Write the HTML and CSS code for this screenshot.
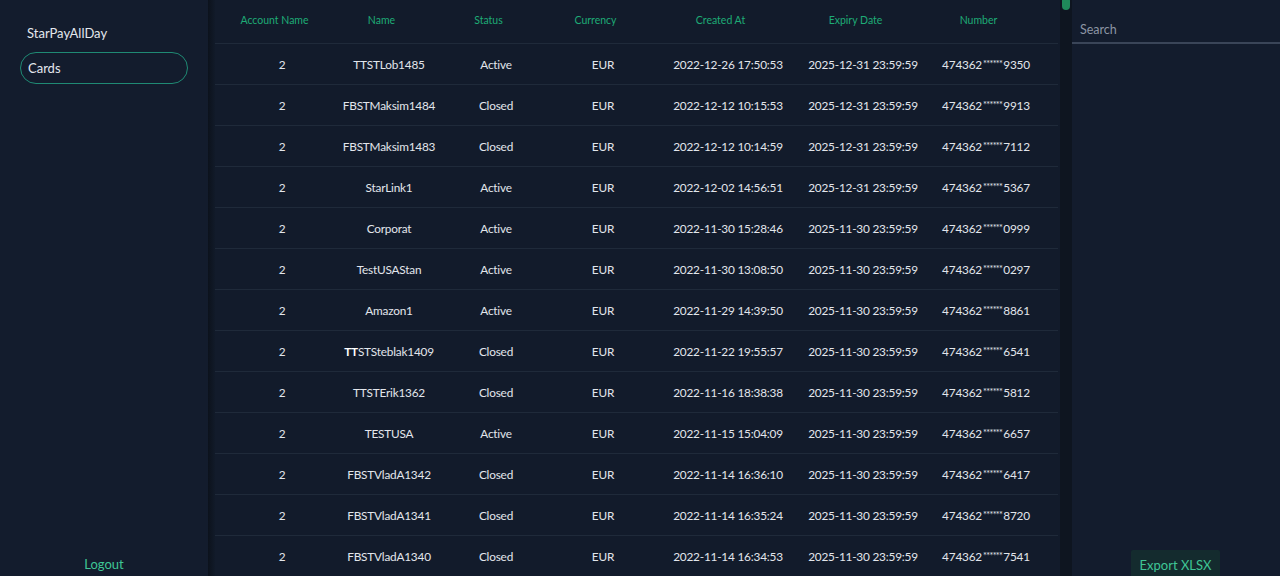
FILE: index.html
```html
<!DOCTYPE html>
<html>
<head>
<meta charset="utf-8">
<link rel="stylesheet" href="styles.css">
</head>
<body>
<div class="app">
  <aside class="sidebar">
    <div class="brand">StarPayAllDay</div>
    <div class="nav-item">Cards</div>
    <div class="spacer"></div>
    <div class="logout">Logout</div>
  </aside>
  <div class="gap"></div>
  <main class="main">
    <div class="row head">
      <div class="cell">Account Name</div>
      <div class="cell">Name</div>
      <div class="cell">Status</div>
      <div class="cell">Currency</div>
      <div class="cell">Created At</div>
      <div class="cell">Expiry Date</div>
      <div class="cell">Number</div>
    </div>
    <div class="row"><div class="cell">2</div><div class="cell">TTSTLob1485</div><div class="cell">Active</div><div class="cell">EUR</div><div class="cell">2022-12-26 17:50:53</div><div class="cell">2025-12-31 23:59:59</div><div class="cell">474362<span class="mask">******</span>9350</div></div>
    <div class="row"><div class="cell">2</div><div class="cell">FBSTMaksim1484</div><div class="cell">Closed</div><div class="cell">EUR</div><div class="cell">2022-12-12 10:15:53</div><div class="cell">2025-12-31 23:59:59</div><div class="cell">474362<span class="mask">******</span>9913</div></div>
    <div class="row"><div class="cell">2</div><div class="cell">FBSTMaksim1483</div><div class="cell">Closed</div><div class="cell">EUR</div><div class="cell">2022-12-12 10:14:59</div><div class="cell">2025-12-31 23:59:59</div><div class="cell">474362<span class="mask">******</span>7112</div></div>
    <div class="row"><div class="cell">2</div><div class="cell">StarLink1</div><div class="cell">Active</div><div class="cell">EUR</div><div class="cell">2022-12-02 14:56:51</div><div class="cell">2025-12-31 23:59:59</div><div class="cell">474362<span class="mask">******</span>5367</div></div>
    <div class="row"><div class="cell">2</div><div class="cell">Corporat</div><div class="cell">Active</div><div class="cell">EUR</div><div class="cell">2022-11-30 15:28:46</div><div class="cell">2025-11-30 23:59:59</div><div class="cell">474362<span class="mask">******</span>0999</div></div>
    <div class="row"><div class="cell">2</div><div class="cell">TestUSAStan</div><div class="cell">Active</div><div class="cell">EUR</div><div class="cell">2022-11-30 13:08:50</div><div class="cell">2025-11-30 23:59:59</div><div class="cell">474362<span class="mask">******</span>0297</div></div>
    <div class="row"><div class="cell">2</div><div class="cell">Amazon1</div><div class="cell">Active</div><div class="cell">EUR</div><div class="cell">2022-11-29 14:39:50</div><div class="cell">2025-11-30 23:59:59</div><div class="cell">474362<span class="mask">******</span>8861</div></div>
    <div class="row"><div class="cell">2</div><div class="cell"><b class="bold">TT</b>STSteblak1409</div><div class="cell">Closed</div><div class="cell">EUR</div><div class="cell">2022-11-22 19:55:57</div><div class="cell">2025-11-30 23:59:59</div><div class="cell">474362<span class="mask">******</span>6541</div></div>
    <div class="row"><div class="cell">2</div><div class="cell">TTSTErik1362</div><div class="cell">Closed</div><div class="cell">EUR</div><div class="cell">2022-11-16 18:38:38</div><div class="cell">2025-11-30 23:59:59</div><div class="cell">474362<span class="mask">******</span>5812</div></div>
    <div class="row"><div class="cell">2</div><div class="cell">TESTUSA</div><div class="cell">Active</div><div class="cell">EUR</div><div class="cell">2022-11-15 15:04:09</div><div class="cell">2025-11-30 23:59:59</div><div class="cell">474362<span class="mask">******</span>6657</div></div>
    <div class="row"><div class="cell">2</div><div class="cell">FBSTVladA1342</div><div class="cell">Closed</div><div class="cell">EUR</div><div class="cell">2022-11-14 16:36:10</div><div class="cell">2025-11-30 23:59:59</div><div class="cell">474362<span class="mask">******</span>6417</div></div>
    <div class="row"><div class="cell">2</div><div class="cell">FBSTVladA1341</div><div class="cell">Closed</div><div class="cell">EUR</div><div class="cell">2022-11-14 16:35:24</div><div class="cell">2025-11-30 23:59:59</div><div class="cell">474362<span class="mask">******</span>8720</div></div>
    <div class="row"><div class="cell">2</div><div class="cell">FBSTVladA1340</div><div class="cell">Closed</div><div class="cell">EUR</div><div class="cell">2022-11-14 16:34:53</div><div class="cell">2025-11-30 23:59:59</div><div class="cell">474362<span class="mask">******</span>7541</div></div>
  </main>
  <div class="scroll"><div class="thumb"></div></div>
  <aside class="panel">
    <div class="search">Search</div>
    <div class="spacer"></div>
    <div class="export">Export XLSX</div>
  </aside>
</div>
</body>
</html>
```
FILE: styles.css
```css
html, body {
  margin: 0;
  padding: 0;
  height: 100%;
  overflow: hidden;
  background: #121b2b;
  font-family: Lato, "Noto Sans", sans-serif;
}
.app {
  display: flex;
  height: 576px;
}
.sidebar {
  width: 208px;
  flex: none;
  background: #131c2d;
  display: flex;
  flex-direction: column;
  padding: 0 20px;
  box-sizing: border-box;
}
.brand {
  color: #e4e8ee;
  font-size: 13px;
  padding: 25px 0 0 7px;
  line-height: 16px;
}
.nav-item {
  margin-top: 11px;
  height: 32px;
  border: 1px solid #1f8a74;
  border-radius: 16px;
  box-sizing: border-box;
  color: #e4e8ee;
  font-size: 13px;
  line-height: 31px;
  padding-left: 7px;
}
.spacer { flex: 1; }
.logout {
  color: #3fc595;
  font-size: 13px;
  text-align: center;
  padding-bottom: 4px;
  line-height: 16px;
}
.gap {
  width: 7px;
  flex: none;
  background: linear-gradient(to right, #0c121c, #111a29);
}
.main {
  width: 845px;
  flex: none;
  background: #121b2b;
}
.row {
  display: grid;
  grid-template-columns: 106px 108px 106px 108px 142px 128px 118px;
  padding-left: 14px;
  margin-right: 2px;
  height: 40px;
  border-bottom: 1px solid #1f2a3a;
  align-items: center;
  color: #e2e6ec;
  font-size: 11.8px;
  letter-spacing: -0.2px;
}
.row.head {
  height: 43px;
  color: #1eab76;
  font-size: 10.5px;
  letter-spacing: 0;
}
.cell {
  text-align: center;
  white-space: nowrap;
}
.head .cell {
  padding-right: 15px;
  padding-bottom: 3px;
}
.mask {
  font-size: 9px;
  letter-spacing: -0.6px;
  vertical-align: 2px;
  margin: 0 1px;
}
.bold { font-weight: 700; color: #ffffff; }
.scroll {
  width: 12px;
  flex: none;
  background: #0e1520;
  position: relative;
}
.thumb {
  position: absolute;
  left: 2px;
  top: -3px;
  width: 8px;
  height: 13px;
  border-radius: 4px;
  background: #1f8a5a;
}
.panel {
  flex: 1;
  background: #131c2d;
  display: flex;
  flex-direction: column;
}
.search {
  margin-top: 16px;
  height: 26px;
  border-bottom: 2px solid #3a4558;
  color: #8c95a4;
  font-size: 12.5px;
  padding-left: 8px;
  line-height: 28px;
}
.export {
  align-self: flex-start;
  margin-left: 59px;
  width: 89px;
  height: 26px;
  background: #142b2e;
  color: #3fc595;
  font-size: 13px;
  text-align: center;
  line-height: 30px;
  border-radius: 2px 2px 0 0;
}
```
